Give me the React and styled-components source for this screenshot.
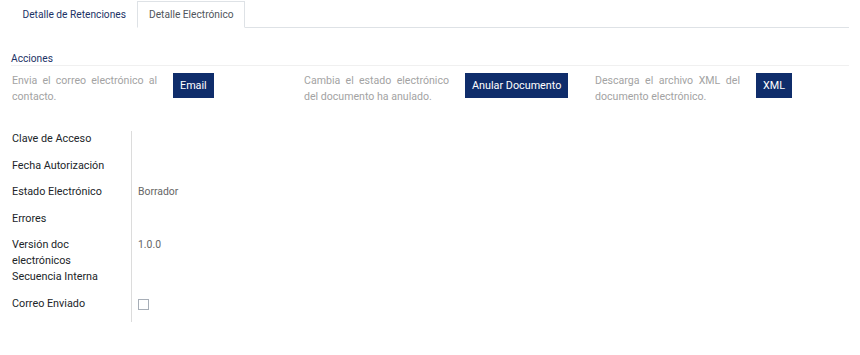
import React from 'react';
import styled, { createGlobalStyle } from 'styled-components';

const GlobalStyle = createGlobalStyle`
  body {
    margin: 0;
    background: #fff;
    font-family: Roboto, "Noto Sans", sans-serif;
    font-size: 11px;
    color: #212529;
  }
`;

const Page = styled.div`
  padding: 1px 11px 0 11px;
`;

const TabBar = styled.div`
  display: flex;
  border-bottom: 1px solid #dee2e6;
`;

const Tab = styled.div`
  height: 25px;
  line-height: 26px;
  padding: 0 10.5px;
  margin-bottom: -1px;
  border: 1px solid ${p => (p.active ? '#dee2e6' : 'transparent')};
  border-bottom-color: ${p => (p.active ? '#fff' : 'transparent')};
  background: #fff;
  color: ${p => (p.active ? '#4f555b' : '#1c3266')};
  font-size: 10.2px;
`;

const Section = styled.div`
  margin-top: 25px;
`;

const SectionTitle = styled.div`
  font-size: 10.2px;
  line-height: 12px;
  font-weight: 400;
  color: #1c3266;
  border-bottom: 1px solid #f0f0f0;
`;

const Actions = styled.div`
  display: grid;
  grid-template-columns: 292px 291px 291px;
  margin-top: 7px;
  padding-left: 1px;
`;

const Action = styled.div`
  display: flex;
  align-items: flex-start;
  gap: 16px;
`;

const Description = styled.div`
  width: 145px;
  font-size: 10.6px;
  line-height: 16px;
  color: #a3a3a3;
  text-align: justify;
`;

const NavyButton = styled.button`
  height: 25px;
  padding: 0 7px;
  border: none;
  border-radius: 0;
  background: #0f2d6b;
  color: #fff;
  font-family: Roboto, "Noto Sans", sans-serif;
  font-size: 10.8px;
  cursor: pointer;
`;

const Fields = styled.div`
  margin-top: 26px;
  padding-left: 1px;
`;

const Row = styled.div`
  display: flex;
  line-height: 16px;
`;

const Label = styled.div`
  width: 119px;
  padding-bottom: 10.5px;
  border-right: 1px solid #dcdcdc;
  font-size: 10.8px;
  color: #212529;
`;

const Value = styled.div`
  padding-left: 6px;
  font-size: 10.4px;
  color: #666;
`;

const Check = styled.span`
  display: inline-block;
  width: 9px;
  height: 9px;
  margin-top: 3px;
  border: 1px solid #a7aeb7;
`;

const actions = [
  { text: 'Envia el correo electrónico al contacto.', label: 'Email' },
  { text: 'Cambia el estado electrónico del documento ha anulado.', label: 'Anular Documento' },
  { text: 'Descarga el archivo XML del documento electrónico.', label: 'XML' },
];

export default function App() {
  return (
    <Page>
      <GlobalStyle />
      <TabBar>
        <Tab>Detalle de Retenciones</Tab>
        <Tab active>Detalle Electrónico</Tab>
      </TabBar>

      <Section>
        <SectionTitle>Acciones</SectionTitle>
        <Actions>
          {actions.map((a, i) => (
            <Action key={i}>
              <Description>{a.text}</Description>
              <NavyButton>{a.label}</NavyButton>
            </Action>
          ))}
        </Actions>
      </Section>

      <Fields>
        <Row><Label>Clave de Acceso</Label><Value /></Row>
        <Row><Label>Fecha Autorización</Label><Value /></Row>
        <Row><Label>Estado Electrónico</Label><Value>Borrador</Value></Row>
        <Row><Label>Errores</Label><Value /></Row>
        <Row>
          <Label>Versión doc<br />electrónicos<br />Secuencia Interna</Label>
          <Value>1.0.0</Value>
        </Row>
        <Row><Label>Correo Enviado</Label><Value><Check /></Value></Row>
      </Fields>
    </Page>
  );
}
